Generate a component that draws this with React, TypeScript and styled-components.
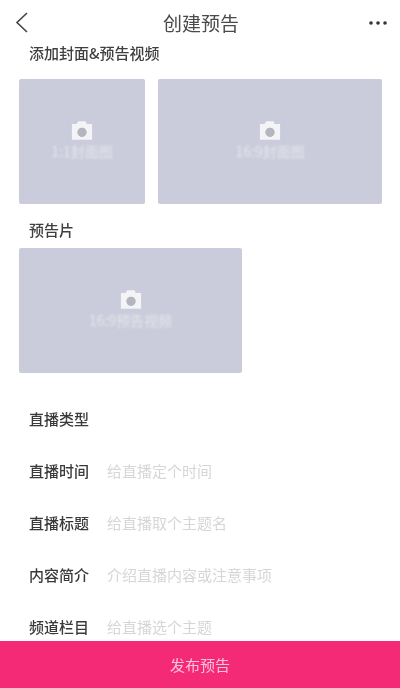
import React from 'react';
import styled, { createGlobalStyle } from 'styled-components';

const GlobalStyle = createGlobalStyle`
  html, body {
    margin: 0;
    padding: 0;
    background: #ffffff;
  }
  * {
    box-sizing: border-box;
  }
`;

const CameraIcon = () => (
  <CameraSvg viewBox='0 0 24 20'>
    <path
      fillRule='evenodd'
      fill='#f4f4f7'
      d='M1 3h5l2-3h8l1 3h6v17H1V3zm11 4a5 5 0 1 0 0 10 5 5 0 0 0 0-10z'
    />
    <circle cx='12' cy='12' r='5' fill='#b4b5c0' />
  </CameraSvg>
);

const Tile = ({ width, caption }: { width: number; caption: string }) => (
  <TileBox $width={width}>
    <CameraIcon />
    <TileCaption>{caption}</TileCaption>
  </TileBox>
);

const rows = [
  { label: '直播类型', hint: '' },
  { label: '直播时间', hint: '给直播定个时间' },
  { label: '直播标题', hint: '给直播取个主题名' },
  { label: '内容简介', hint: '介绍直播内容或注意事项' },
  { label: '频道栏目', hint: '给直播选个主题' },
];

const App = () => {
  return (
    <Page>
      <GlobalStyle />
      <Header>
        <HeaderSlot>
          <BackIcon viewBox='0 0 14 23'>
            <path
              d='M12 2 L2 11.5 L12 21'
              fill='none'
              stroke='#444444'
              strokeWidth='1.6'
            />
          </BackIcon>
        </HeaderSlot>
        <Title>创建预告</Title>
        <HeaderSlot $end>
          <MoreIcon viewBox='0 0 18 4'>
            <circle cx='2' cy='2' r='1.8' fill='#333333' />
            <circle cx='9' cy='2' r='1.8' fill='#333333' />
            <circle cx='16' cy='2' r='1.8' fill='#333333' />
          </MoreIcon>
        </HeaderSlot>
      </Header>

      <SectionLabel>添加封面&预告视频</SectionLabel>
      <TileRow $top={18}>
        <Tile width={126} caption='1:1封面图' />
        <Tile width={224} caption='16:9封面图' />
      </TileRow>

      <SectionLabel $top={18}>预告片</SectionLabel>
      <TileRow $top={10}>
        <Tile width={223} caption='16:9预告视频' />
      </TileRow>

      <Form>
        {rows.map((row) => (
          <Row key={row.label}>
            <RowLabel>{row.label}</RowLabel>
            {row.hint && <RowHint>{row.hint}</RowHint>}
          </Row>
        ))}
      </Form>

      <Publish>发布预告</Publish>
    </Page>
  );
};

const Page = styled.div`
  position: relative;
  width: 400px;
  height: 688px;
  overflow: hidden;
  background: #ffffff;
  font-family: 'Noto Sans CJK SC', 'Liberation Sans', sans-serif;
`;

const Header = styled.div`
  display: flex;
  align-items: center;
  height: 45px;
  padding: 0 13px 0 15px;
`;

const HeaderSlot = styled.div<{ $end?: boolean }>`
  display: flex;
  justify-content: ${({ $end }) => ($end ? 'flex-end' : 'flex-start')};
  width: 20px;
`;

const BackIcon = styled.svg`
  width: 14px;
  height: 23px;
  filter: blur(0.3px);
`;

const MoreIcon = styled.svg`
  width: 18px;
  height: 4px;
`;

const Title = styled.div`
  flex: 1;
  text-align: center;
  font-size: 19px;
  line-height: 26px;
  color: #4a4a4a;
  filter: blur(0.4px);
`;

const SectionLabel = styled.div<{ $top?: number }>`
  margin-top: ${({ $top }) => $top ?? 0}px;
  padding-left: 29px;
  height: 16px;
  font-size: 15px;
  font-weight: 500;
  line-height: 16px;
  color: #3f3f3f;
  filter: blur(0.4px);
`;

const TileRow = styled.div<{ $top: number }>`
  display: flex;
  gap: 13px;
  margin-top: ${({ $top }) => $top}px;
  padding-left: 19px;
`;

const TileBox = styled.div<{ $width: number }>`
  display: flex;
  flex-direction: column;
  align-items: center;
  justify-content: center;
  gap: 2px;
  width: ${({ $width }) => $width}px;
  height: 125px;
  padding-bottom: 2px;
  background: #cbccdb;
  border-radius: 2px;
`;

const CameraSvg = styled.svg`
  width: 22px;
  height: 19px;
  filter: blur(0.4px);
`;

const TileCaption = styled.div`
  font-size: 14px;
  line-height: 18px;
  color: #eeeef3;
  opacity: 0.75;
  filter: blur(1px);
`;

const Form = styled.div`
  display: flex;
  flex-direction: column;
  margin-top: 20px;
`;

const Row = styled.div`
  display: flex;
  align-items: center;
  height: 52px;
  padding-left: 29px;
`;

const RowLabel = styled.div`
  width: 78px;
  font-size: 15px;
  font-weight: 500;
  line-height: 20px;
  color: #3a3a3a;
  filter: blur(0.4px);
`;

const RowHint = styled.div`
  font-size: 15px;
  line-height: 20px;
  color: #d6d6d8;
  filter: blur(0.5px);
`;

const Publish = styled.div`
  position: absolute;
  left: 0;
  right: 0;
  bottom: 0;
  height: 47px;
  display: flex;
  align-items: center;
  justify-content: center;
  background: #f42a77;
  color: #fbc3d9;
  font-size: 15px;
  filter: blur(0.3px);
`;

export default App;
